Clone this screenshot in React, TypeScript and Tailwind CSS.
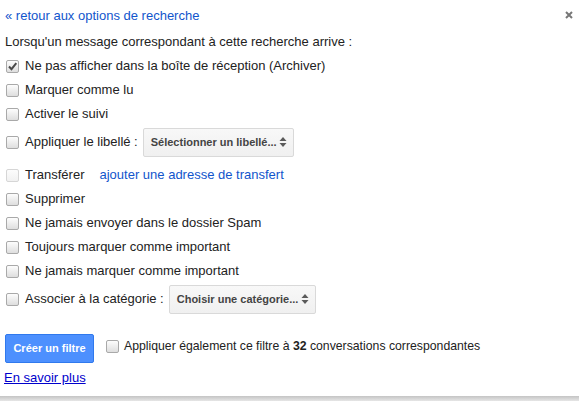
import React from 'react';

const font = 'font-["Liberation_Sans",Arial,sans-serif]';

// Old-style gradient checkbox
const Box = ({ checked = false, disabled = false }: { checked?: boolean; disabled?: boolean }) => (
  <span
    className={`relative inline-block h-[13px] w-[13px] shrink-0 rounded-[2px] border ${
      disabled
        ? 'border-[#d6d6d6] bg-gradient-to-b from-[#fcfcfc] to-[#f1f1f1]'
        : 'border-[#a9a9a9] bg-gradient-to-b from-[#fdfdfd] to-[#dedede]'
    }`}
  >
    {checked && (
      <svg viewBox="0 0 13 13" className="absolute -left-px -top-px h-[13px] w-[13px]">
        <path d="M3 6.5 L5.5 9.2 L10.3 3.2" fill="none" stroke="#4a4a4a" strokeWidth="2" />
      </svg>
    )}
  </span>
);

const Row = ({
  label,
  checked,
  disabled,
  children,
  h = 'h-[24px]',
}: {
  label: string;
  checked?: boolean;
  disabled?: boolean;
  children?: React.ReactNode;
  h?: string;
}) => (
  <div className={`flex ${h} items-center pl-[1px]`}>
    <Box checked={checked} disabled={disabled} />
    <span className="ml-[6px]">{label}</span>
    {children}
  </div>
);

const Select = ({ text, w }: { text: string; w: string }) => (
  <div
    className={`ml-[5px] flex h-[29px] ${w} items-center justify-between rounded-[2px] border border-[#d9d9d9] bg-gradient-to-b from-[#f8f8f8] to-[#f0f0f0] pl-[7px] pr-[6px] text-[11px] font-bold text-[#444]`}
  >
    <span>{text}</span>
    <svg viewBox="0 0 8 12" className="h-[12px] w-[8px]">
      <path d="M0.5 5 L4 1 L7.5 5 Z M0.5 7 L4 11 L7.5 7 Z" fill="#5a5a5a" />
    </svg>
  </div>
);

export default function App() {
  return (
    <div className={`${font} relative flex h-[401px] w-[579px] flex-col bg-white text-[13px] text-[#222]`}>
      <div className="flex-1 pl-[5px] pt-[8px]">
        <div className="flex h-[16px] items-center text-[#1155cc]">« retour aux options de recherche</div>
        <div className="mt-[10px] flex h-[16px] items-center">
          Lorsqu'un message correspondant à cette recherche arrive :
        </div>
        <div className="mt-[4px]">
          <Row label="Ne pas afficher dans la boîte de réception (Archiver)" checked />
          <Row label="Marquer comme lu" />
          <Row label="Activer le suivi" />
          <Row label="Appliquer le libellé :" h="h-[32px]">
            <Select text="Sélectionner un libellé..." w="w-[151px]" />
          </Row>
          <div className="mt-[5px]">
            <Row label="Transférer" disabled>
              <span className="ml-[15px] text-[#1155cc]">ajouter une adresse de transfert</span>
            </Row>
          </div>
          <Row label="Supprimer" />
          <Row label="Ne jamais envoyer dans le dossier Spam" />
          <Row label="Toujours marquer comme important" />
          <Row label="Ne jamais marquer comme important" />
          <Row label="Associer à la catégorie :" h="h-[32px]">
            <Select text="Choisir une catégorie..." w="w-[147px]" />
          </Row>
        </div>
        <div className="mt-[19px] flex items-start">
          <button className="h-[29px] w-[89px] rounded-[2px] border border-[#3079ed] bg-[#4d90fe] text-[11px] font-bold text-white">
            Créer un filtre
          </button>
          <div className="ml-[12px] mt-[4px] flex h-[16px] items-center">
            <Box />
            <span className="ml-[5px] text-[12.25px]">
              Appliquer également ce filtre à <b>32</b> conversations correspondantes
            </span>
          </div>
        </div>
        <div className="mt-[7px] flex h-[16px] items-center">
          <a className="-ml-px text-[#0000cc] underline">En savoir plus</a>
        </div>
      </div>
      <div className="h-[5px] bg-gradient-to-b from-[#c4c4c4] to-[#e6e6e6]" />
      <svg viewBox="0 0 8 8" className="absolute left-[565px] top-[11px] h-[8px] w-[8px]">
        <path d="M1 1 L7 7 M7 1 L1 7" stroke="#777" strokeWidth="2" />
      </svg>
    </div>
  );
}
